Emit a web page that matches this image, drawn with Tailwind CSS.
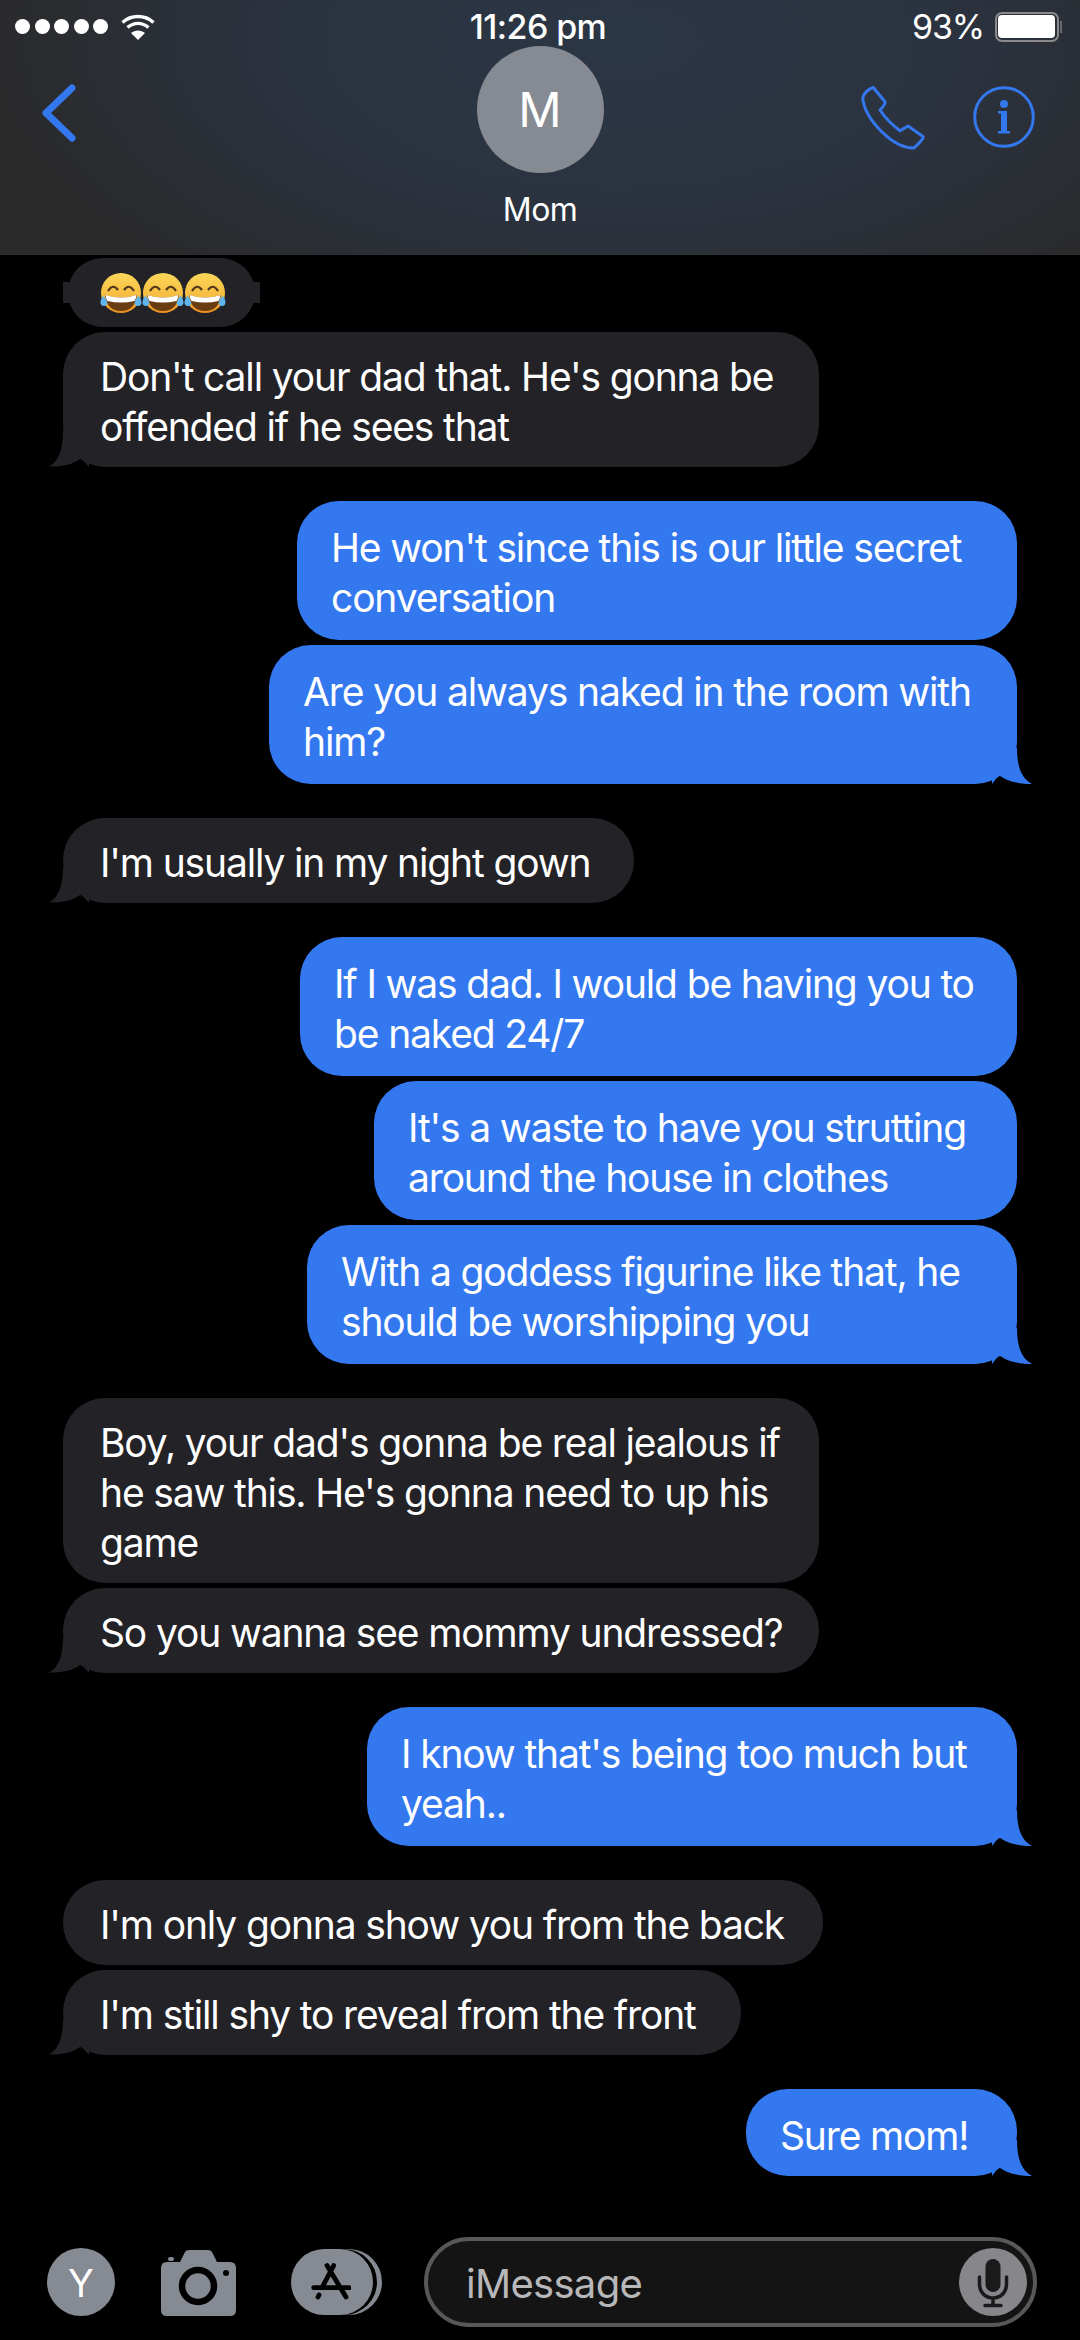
<!DOCTYPE html>
<html>
<head>
<meta charset="utf-8">
<script src="https://cdn.jsdelivr.net/npm/@tailwindcss/browser@4"></script>
</head>
<body class="bg-black">
<div class="w-[1080px] h-[2340px] overflow-hidden bg-black text-white font-['Inter',sans-serif]">

  <!-- Navigation header -->
  <header class="h-[255px] bg-[radial-gradient(ellipse_640px_320px_at_620px_40px,#2b3644_0%,#2b3340_50%,#2a2a2b_100%)]">
    <div class="flex items-center justify-between h-[50px] pl-[15px] pr-[21px] pt-[3px]">
      <div class="flex items-center gap-[13px] w-[300px]">
        <div class="flex gap-[4.5px]">
          <span class="w-[15px] h-[15px] rounded-full bg-white"></span>
          <span class="w-[15px] h-[15px] rounded-full bg-white"></span>
          <span class="w-[15px] h-[15px] rounded-full bg-white"></span>
          <span class="w-[15px] h-[15px] rounded-full bg-white"></span>
          <span class="w-[15px] h-[15px] rounded-full bg-white"></span>
        </div>
        <svg width="34" height="26" viewBox="0 0 34 26" fill="none" stroke="white" stroke-width="3.4">
          <path d="M1.5 8.5 C10 0.5 24 0.5 32.5 8.5"/>
          <path d="M6.5 13.5 C13 8 21 8 27.5 13.5"/>
          <path d="M10 19 L17 26 L24 19 C20 15.5 14 15.5 10 19 Z" fill="white" stroke="none"/>
        </svg>
      </div>
      <div class="text-[34px] font-medium tracking-[-0.6px] ml-[2px]">11:26 pm</div>
      <div class="flex items-center justify-end gap-[11px] w-[300px]">
        <span class="text-[34px] tracking-[-1.2px]">93%</span>
        <div class="relative w-[64px] h-[30px] rounded-[7px] border-2 border-[#8a8a8c] p-[1.5px]">
          <div class="w-full h-full rounded-[4px] bg-white"></div>
          <span class="absolute right-[-5px] top-[7px] w-[2px] h-[12px] bg-[#6a6a6c]"></span>
        </div>
      </div>
    </div>

    <div class="flex items-start -mt-[4px]">
      <div class="w-[300px] pl-[40px] pt-[38px]">
        <svg width="40" height="60" viewBox="0 0 40 60" fill="none" stroke="#3478f0" stroke-width="7" stroke-linecap="round" stroke-linejoin="round"><path d="M32 4 L6 29 L32 54"/></svg>
      </div>
      <div class="flex-1 flex flex-col items-center">
        <div class="w-[127px] h-[127px] rounded-full bg-[#868a92] flex items-center justify-center text-[48px]">M</div>
        <div class="mt-[13px] text-[32px] tracking-[-0.6px]">Mom</div>
      </div>
      <div class="w-[300px] flex justify-end gap-[47px] pr-[45px] pt-[40px]">
        <svg width="66" height="66" viewBox="0 0 66 66" fill="none" stroke="#3478f0" stroke-width="3" stroke-linejoin="round"><path d="M13.3 1.5 L25 15.7 Q26 18 20 24 Q28 36 40 44.7 L48 40 L63.3 50.7 Q63 54 54 62 C43 62 32 56 22 46 C10 34 4 24 2.7 12.3 C3 8 8 3 13.3 1.5 Z"/></svg>
        <svg width="62" height="62" viewBox="0 0 62 62"><circle cx="31" cy="31" r="29.3" fill="none" stroke="#3478f0" stroke-width="3"/><circle cx="31" cy="18" r="4" fill="#3478f0"/><path fill="#3478f0" d="M25 25 H34 V45 H37 V47.5 H25 V45 H28 V27.5 H25 Z"/></svg>
      </div>
    </div>
  </header>

  <!-- Conversation -->
  <main class="flex flex-col text-[39px] leading-[50px] tracking-[-1.15px]">
    <div class="relative self-start mt-[3px] ml-[68px] w-[187px] h-[69px] rounded-full bg-[#232227] flex items-center justify-center">
      <span class="absolute left-[-5px] top-[24px] w-[197px] h-[21px] bg-[#232227]"></span>
      <svg class="relative ml-[3px]" width="128" height="44" viewBox="0 0 128 44">
        <defs>
          <linearGradient id="skin" x1="0" y1="0" x2="0" y2="1"><stop offset="0" stop-color="#fbd75a"/><stop offset="0.6" stop-color="#f6bb3f"/><stop offset="1" stop-color="#e88f22"/></linearGradient>
        </defs>
        <g id="laugh">
          <circle cx="22" cy="22" r="20" fill="url(#skin)"/>
          <path d="M9 20 Q14 12 19 19 M25 19 Q30 12 35 20" stroke="#54361a" stroke-width="2.2" fill="none"/>
          <path d="M6 24 Q22 29 38 24 Q36 40 22 40 Q8 40 6 24Z" fill="#6a3c12"/>
          <path d="M6.5 24 Q22 29 37.5 24 Q37 28 35.5 30 Q22 33 8.5 30 Q7 28 6.5 24Z" fill="#fff"/>
          <path d="M4 25 C1 29 0 35 5 35 C10 35 9 29 4 25Z M40 25 C43 29 44 35 39 35 C34 35 35 29 40 25Z" fill="#5fb4ee"/>
        </g>
        <use href="#laugh" x="42"/>
        <use href="#laugh" x="84"/>
      </svg>
    </div>

    <div class="relative self-start mt-[5px] ml-[63px] w-[756px] h-[135px] rounded-[42px] bg-[#232227] pl-[37px] pt-[20px]">Don't call your dad that. He's gonna be<br>offended if he sees that
      <svg class="absolute left-[-14px] bottom-0" width="40" height="36" viewBox="0 0 40 36" fill="#232227"><path d="M14 0 C14 18 10 30 0 35.5 C10 36 25 34 32 27 L40 36 V0 Z"/></svg>
    </div>

    <div class="relative self-end mt-[34px] mr-[63px] w-[720px] h-[139px] rounded-[42px] bg-[#3478f0] pl-[34px] pt-[22px]">He won't since this is our little secret<br>conversation</div>
    <div class="relative self-end mt-[5px] mr-[63px] w-[748px] h-[139px] rounded-[42px] bg-[#3478f0] pl-[34px] pt-[22px]">Are you always naked in the room with<br>him?
      <svg class="absolute right-[-15px] bottom-0" width="40" height="36" viewBox="0 0 40 36" fill="#3478f0"><path d="M25 0 C25 18 29 30 40 36 C29 36 15 34 7 27 L0 36 V0 Z"/></svg>
    </div>

    <div class="relative self-start mt-[34px] ml-[63px] w-[571px] h-[85px] rounded-[42px] bg-[#232227] pl-[37px] pt-[20px]">I'm usually in my night gown
      <svg class="absolute left-[-14px] bottom-0" width="40" height="36" viewBox="0 0 40 36" fill="#232227"><path d="M14 0 C14 18 10 30 0 35.5 C10 36 25 34 32 27 L40 36 V0 Z"/></svg>
    </div>

    <div class="relative self-end mt-[34px] mr-[63px] w-[717px] h-[139px] rounded-[42px] bg-[#3478f0] pl-[34px] pt-[22px]">If I was dad. I would be having you to<br>be naked 24/7</div>
    <div class="relative self-end mt-[5px] mr-[63px] w-[643px] h-[139px] rounded-[42px] bg-[#3478f0] pl-[34px] pt-[22px]">It's a waste to have you strutting<br>around the house in clothes</div>
    <div class="relative self-end mt-[5px] mr-[63px] w-[710px] h-[139px] rounded-[42px] bg-[#3478f0] pl-[34px] pt-[22px]">With a goddess figurine like that, he<br>should be worshipping you
      <svg class="absolute right-[-15px] bottom-0" width="40" height="36" viewBox="0 0 40 36" fill="#3478f0"><path d="M25 0 C25 18 29 30 40 36 C29 36 15 34 7 27 L0 36 V0 Z"/></svg>
    </div>

    <div class="relative self-start mt-[34px] ml-[63px] w-[756px] h-[185px] rounded-[42px] bg-[#232227] pl-[37px] pt-[20px]">Boy, your dad's gonna be real jealous if<br>he saw this. He's gonna need to up his<br>game</div>
    <div class="relative self-start mt-[5px] ml-[63px] w-[756px] h-[85px] rounded-[42px] bg-[#232227] pl-[37px] pt-[20px]">So you wanna see mommy undressed?
      <svg class="absolute left-[-14px] bottom-0" width="40" height="36" viewBox="0 0 40 36" fill="#232227"><path d="M14 0 C14 18 10 30 0 35.5 C10 36 25 34 32 27 L40 36 V0 Z"/></svg>
    </div>

    <div class="relative self-end mt-[34px] mr-[63px] w-[650px] h-[139px] rounded-[42px] bg-[#3478f0] pl-[34px] pt-[22px]">I know that's being too much but<br>yeah..
      <svg class="absolute right-[-15px] bottom-0" width="40" height="36" viewBox="0 0 40 36" fill="#3478f0"><path d="M25 0 C25 18 29 30 40 36 C29 36 15 34 7 27 L0 36 V0 Z"/></svg>
    </div>

    <div class="relative self-start mt-[34px] ml-[63px] w-[760px] h-[85px] rounded-[42px] bg-[#232227] pl-[37px] pt-[20px]">I'm only gonna show you from the back</div>
    <div class="relative self-start mt-[5px] ml-[63px] w-[678px] h-[85px] rounded-[42px] bg-[#232227] pl-[37px] pt-[20px]">I'm still shy to reveal from the front
      <svg class="absolute left-[-14px] bottom-0" width="40" height="36" viewBox="0 0 40 36" fill="#232227"><path d="M14 0 C14 18 10 30 0 35.5 C10 36 25 34 32 27 L40 36 V0 Z"/></svg>
    </div>

    <div class="relative self-end mt-[34px] mr-[63px] w-[271px] h-[87px] rounded-[42px] bg-[#3478f0] pl-[34px] pt-[22px]">Sure mom!
      <svg class="absolute right-[-15px] bottom-0" width="40" height="36" viewBox="0 0 40 36" fill="#3478f0"><path d="M25 0 C25 18 29 30 40 36 C29 36 15 34 7 27 L0 36 V0 Z"/></svg>
    </div>
  </main>

  <!-- Compose bar -->
  <footer class="mt-[61px] h-[90px] flex items-center">
    <div class="ml-[47px] w-[68px] h-[68px] rounded-full bg-[#868a92] flex items-center justify-center text-[38px] pt-[2px]">Y</div>
    <svg class="ml-[46px] mt-[2px]" width="75" height="66" viewBox="0 0 75 66">
      <path fill="#868a92" d="M6 12 H19 L24 2 Q25 0 28 0 H47 Q50 0 51 2 L56 12 H69 Q75 12 75 18 V60 Q75 66 69 66 H6 Q0 66 0 60 V18 Q0 12 6 12Z"/>
      <rect x="7" y="7" width="6" height="4" rx="2" fill="#868a92"/>
      <circle cx="37" cy="36" r="16" fill="none" stroke="#000" stroke-width="6.5"/>
      <circle cx="65" cy="23" r="3" fill="#000"/>
    </svg>
    <div class="relative ml-[55px] w-[91px] h-[66px]">
      <div class="absolute left-[9px] top-0 w-[82px] h-[66px] rounded-full bg-[#868a92]"></div>
      <div class="absolute left-[4px] top-0 w-[82px] h-[66px] rounded-full bg-black"></div>
      <div class="absolute left-0 top-0 w-[82px] h-[66px] rounded-full bg-[#868a92] flex items-center justify-center">
        <svg class="-ml-[3px] -mt-[1px]" width="40" height="40" viewBox="0 0 40 40" fill="none" stroke="#000" stroke-width="4.8" stroke-linecap="round"><path d="M22.7 3.5 L11 25.7 M16 3.5 L35 35 M2.7 25.7 H38 M8 33 L7 35"/></svg>
      </div>
    </div>
    <div class="relative ml-[42px] w-[613px] h-[90px] rounded-full border-[4px] border-[#58585a] bg-[#141414] pl-[38px] pt-[3px] flex items-center text-[40px] tracking-[-0.7px] text-[#b8b8ba]">iMessage
      <div class="absolute right-[6px] top-[7px] w-[68px] h-[68px] rounded-full bg-[#87878b] flex items-center justify-center">
        <svg width="34" height="54" viewBox="0 0 34 54" fill="none" stroke="#1a1a1b" stroke-width="3.5" stroke-linecap="round"><rect x="9.5" y="4" width="15" height="33" rx="7.5" fill="#1a1a1b" stroke="none"/><path d="M3.5 22 V29 C3.5 38 10 43 17 43 C24 43 30.5 38 30.5 29 V22 M17 43 V50 M9 50.5 H25"/></svg>
      </div>
    </div>
  </footer>
</div>
</body>
</html>
